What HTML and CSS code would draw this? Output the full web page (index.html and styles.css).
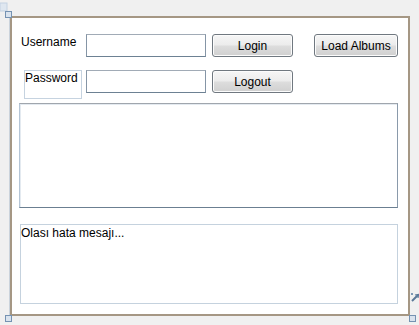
FILE: index.html
```html
<!DOCTYPE html>
<html lang="tr">

<head>
    <meta charset="UTF-8">
    <meta name="viewport" content="width=device-width, initial-scale=1.0">
    <title>Albums</title>
    <link rel="stylesheet" href="styles.css">
</head>

<body>
    <!-- designer adorners -->
    <svg class="corner-icon" width="8" height="12" viewBox="0 0 8 12">
        <rect x="0" y="3" width="7" height="8" fill="#dfe7f0" stroke="#c4d2e2" stroke-width="1"/>
    </svg>
    <span class="handle handle-tl"></span>
    <span class="handle handle-bl"></span>
    <span class="handle handle-br"></span>
    <svg class="resize-icon" width="9" height="9" viewBox="0 0 9 9">
        <rect x="0" y="0" width="2" height="2" fill="#7d98b5"/>
        <path d="M1 8 L7 2" stroke="#5a7898" stroke-width="2"/>
        <path d="M4 2 L7.5 1.5 L7 5" fill="none" stroke="#5a7898" stroke-width="1.2"/>
    </svg>

    <div class="window">
        <div class="row row-top">
            <label class="lbl" for="username">Username</label>
            <input type="text" id="username" class="textbox">
            <button class="btn btn-login">Login</button>
            <button class="btn btn-albums">Load Albums</button>
        </div>

        <div class="row row-pass">
            <label class="lbl-box" for="password">Password</label>
            <input type="password" id="password" class="textbox textbox-pass">
            <button class="btn btn-login">Logout</button>
        </div>

        <!-- albums list -->
        <div class="list"></div>

        <!-- error message -->
        <div class="error">Olası hata mesajı...</div>
    </div>
</body>

</html>
```

FILE: styles.css
```css
body {
    margin: 0;
    background-color: #f0f0f0;
    font-family: 'Liberation Sans', Arial, sans-serif;
    font-size: 12px;
    color: #000;
    position: relative;
    width: 419px;
    height: 325px;
    overflow: hidden;
}

.window {
    margin: 16px 0 0 10px;
    width: 396px;
    height: 296px;
    border: 2px solid #a59784;
    box-shadow: -1px 0 0 #cad3dc;
    background-color: #fff;
    display: flex;
    flex-direction: column;
}

.row {
    display: flex;
    align-items: flex-start;
}

.row-top {
    margin-top: 16px;
}

.row-pass {
    margin-top: 13px;
}

.lbl {
    margin-left: 9px;
    width: 65px;
    padding-top: 1px;
    line-height: 15px;
}

.lbl-box {
    margin-left: 12px;
    width: 58px;
    height: 29px;
    box-sizing: border-box;
    border: 1px solid #c6d3e0;
    line-height: 14px;
    padding-left: 0;
}

.textbox {
    width: 120px;
    height: 23px;
    margin: 0;
    padding: 0 2px;
    box-sizing: border-box;
    border: 1px solid;
    border-color: #a1abb6 #8595a6 #6d8193 #8595a6;
    background: #fff;
    font-family: inherit;
    font-size: 12px;
    outline: none;
}

.textbox-pass {
    margin-left: 4px;
}

.btn {
    height: 23px;
    margin: 0;
    padding: 0;
    box-sizing: border-box;
    border: 1px solid #707880;
    border-radius: 3px;
    background: linear-gradient(#f6f6f6 0%, #ececec 48%, #dddddd 52%, #d0d0d0 100%);
    box-shadow: inset 0 0 0 1px #fcfcfc;
    font-family: inherit;
    font-size: 12px;
    color: #000;
}

.btn-login {
    margin-left: 6px;
    width: 81px;
}

.btn-albums {
    margin-left: 21px;
    width: 84px;
}

.list {
    margin: 4px 0 0 7px;
    width: 379px;
    height: 105px;
    box-sizing: border-box;
    border: 1px solid;
    border-color: #a0a6ad #8a9aab #6b7f91 #b5c5d6;
    box-shadow: inset 1px 1px 0 #e4eaf0;
}

.error {
    margin: 16px 0 0 8px;
    width: 378px;
    height: 80px;
    box-sizing: border-box;
    border: 1px solid #c5d2de;
    padding: 1px 0 0 0;
    line-height: 14px;
}

/* designer adorners, drawn over the page */
.corner-icon {
    position: absolute;
    left: 0;
    top: 0;
}

.handle {
    position: absolute;
    width: 5px;
    height: 5px;
    border: 1px solid #7592b2;
    background-color: #d9e3ee;
}

.handle-tl {
    left: 5px;
    top: 11px;
}

.handle-bl {
    left: 5px;
    top: 315px;
}

.handle-br {
    left: 409px;
    top: 315px;
}

.resize-icon {
    position: absolute;
    left: 411px;
    top: 293px;
}
```
